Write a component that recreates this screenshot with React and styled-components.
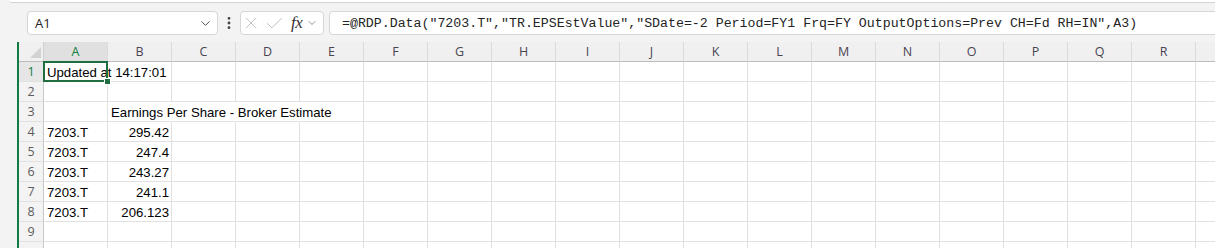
import React from 'react';
import styled, { createGlobalStyle } from 'styled-components';
import { ChevronDown, EllipsisVertical, X, Check } from 'lucide-react';

const GlobalStyle = createGlobalStyle`
  body {
    margin: 0;
    background: #f3f3f3;
    overflow: hidden;
  }
`;

const Page = styled.div`
  width: 1215px;
  height: 248px;
  overflow: hidden;
  background: #f3f3f3;
  font-family: "Open Sans", "Noto Sans", sans-serif;
`;

const Ribbon = styled.div`
  height: 2px;
  margin-left: 9px;
  background: #ffffff;
  border-bottom: 1px solid #d4d4d4;
  border-bottom-left-radius: 6px;
`;

const FormulaBar = styled.div`
  display: flex;
  align-items: center;
  height: 24px;
  margin-top: 8px;
  padding-left: 27px;
`;

const NameBox = styled.div`
  box-sizing: border-box;
  width: 191px;
  height: 24px;
  display: flex;
  align-items: center;
  justify-content: space-between;
  padding: 0 4px 0 7px;
  background: #fff;
  border: 1px solid #d6d6d6;
  border-radius: 4px;
  font-size: 13px;
  color: #242424;
`;

const Dots = styled.div`
  width: 22px;
  display: flex;
  justify-content: center;
  color: #444;
`;

const FxBox = styled.div`
  box-sizing: border-box;
  width: 84px;
  height: 24px;
  margin-right: 5px;
  display: flex;
  align-items: center;
  gap: 3px;
  background: #fff;
  border: 1px solid #d6d6d6;
  border-radius: 4px;
  color: #bdbdbd;
`;

const Fx = styled.span`
  font-family: "Liberation Serif", serif;
  font-style: italic;
  font-size: 17px;
  color: #333;
  margin-left: 3px;
  margin-right: 1px;
  letter-spacing: -0.5px;
`;

const FormulaInput = styled.div`
  box-sizing: border-box;
  flex: 1;
  min-width: 0;
  height: 24px;
  margin-right: -12px;
  display: flex;
  align-items: center;
  padding-left: 12px;
  background: #fff;
  border: 1px solid #d6d6d6;
  border-radius: 4px;
  font-family: "Liberation Mono", monospace;
  font-size: 13.25px;
  color: #242424;
  white-space: pre;
  overflow: hidden;
`;

const Sheet = styled.div`
  margin-top: 7px;
  padding-left: 17px;
`;

const Grid = styled.div`
  display: grid;
  grid-template-columns: 25px repeat(19, 64px);
  grid-auto-rows: 20px;
  width: max-content;
  border-left: 2px solid #107c41;
  background: #fff;
`;

const Corner = styled.div`
  position: relative;
  box-sizing: border-box;
  background: #f0f0f0;
  border-right: 1px solid #cfcfcf;
  border-bottom: 1px solid #bdbdbd;
  &::after {
    content: '';
    position: absolute;
    right: 2px;
    bottom: 3px;
    border-left: 11px solid transparent;
    border-bottom: 11px solid #d2d2d2;
  }
`;

const ColHead = styled.div`
  box-sizing: border-box;
  text-align: center;
  line-height: 19px;
  font-size: 12.5px;
  color: ${p => (p.$active ? '#107c41' : '#4a4452')};
  background: ${p => (p.$active ? '#e0e0e0' : '#f0f0f0')};
  border-right: 1px solid #dadada;
  border-bottom: 1px solid #bdbdbd;
`;

const RowHead = styled.div`
  box-sizing: border-box;
  text-align: center;
  line-height: 20px;
  font-size: 12.5px;
  color: ${p => (p.$active ? '#107c41' : '#5c5c5c')};
  background: ${p => (p.$active ? '#e6e6e6' : '#f3f3f3')};
  border-right: 1px solid #c8c8c8;
  border-bottom: 1px solid #e1e1e1;
`;

const Cell = styled.div`
  position: relative;
  box-sizing: border-box;
  padding: 1px ${p => (p.$right ? '2px' : '3px')} 0;
  line-height: 19px;
  font-family: "Liberation Sans", Arial, sans-serif;
  font-size: 13.2px;
  color: #000;
  white-space: nowrap;
  text-align: ${p => (p.$right ? 'right' : 'left')};
  border-right: 1px solid ${p => (p.$open ? 'transparent' : '#e1e1e1')};
  border-bottom: 1px solid #e1e1e1;
`;

const Selection = styled.div`
  position: absolute;
  top: -1px;
  left: -1px;
  right: -1px;
  bottom: -1px;
  border: 2px solid #1e6e42;
  z-index: 2;
`;

const Handle = styled.div`
  position: absolute;
  right: -5px;
  bottom: -5px;
  width: 5px;
  height: 5px;
  background: #1e6e42;
  border: 1px solid #fff;
`;

// last column is only partly in view, its letter falls off the page
const letters = 'ABCDEFGHIJKLMNOPQR'.split('').concat('');

const values = [
  ['7203.T', '295.42'],
  ['7203.T', '247.4'],
  ['7203.T', '243.27'],
  ['7203.T', '241.1'],
  ['7203.T', '206.123'],
];

function buildRows() {
  const rows = [];
  for (let r = 1; r <= 10; r++) {
    const cells = letters.map(() => ({ v: '' }));
    if (r === 1) {
      cells[0] = { v: 'Updated at 14:17:01', open: true, selected: true };
    }
    if (r === 3) {
      cells[1] = { v: 'Earnings Per Share - Broker Estimate', open: true };
      cells[2] = { v: '', open: true };
      cells[3] = { v: '', open: true };
    }
    if (r >= 4 && r <= 8) {
      const [ric, eps] = values[r - 4];
      cells[0] = { v: ric };
      cells[1] = { v: eps, right: true };
    }
    rows.push(cells);
  }
  return rows;
}

const formula =
  '=@RDP.Data("7203.T","TR.EPSEstValue","SDate=-2 Period=FY1 Frq=FY OutputOptions=Prev CH=Fd RH=IN",A3)';

export default function App() {
  const rows = buildRows();
  return (
    <Page>
      <GlobalStyle />
      <Ribbon />
      <FormulaBar>
        <NameBox>
          <span>A1</span>
          <ChevronDown size={15} strokeWidth={1.5} color="#444" />
        </NameBox>
        <Dots>
          <EllipsisVertical size={16} strokeWidth={2.2} />
        </Dots>
        <FxBox>
          <X size={20} strokeWidth={1.1} />
          <Check size={21} strokeWidth={1.1} />
          <Fx>fx</Fx>
          <ChevronDown size={12} strokeWidth={1.4} color="#666" />
        </FxBox>
        <FormulaInput>{formula}</FormulaInput>
      </FormulaBar>
      <Sheet>
        <Grid>
          <Corner />
          {letters.map((l, i) => (
            <ColHead key={i} $active={l === 'A'}>{l}</ColHead>
          ))}
          {rows.map((cells, i) => (
            <React.Fragment key={i}>
              {/* row 10 sits below the fold, only its top edge shows */}
              <RowHead $active={i === 0}>{i < 9 ? i + 1 : ''}</RowHead>
              {cells.map((c, j) => (
                <Cell key={j} $open={c.open} $right={c.right}>
                  {c.v}
                  {c.selected && (
                    <Selection>
                      <Handle />
                    </Selection>
                  )}
                </Cell>
              ))}
            </React.Fragment>
          ))}
        </Grid>
      </Sheet>
    </Page>
  );
}
